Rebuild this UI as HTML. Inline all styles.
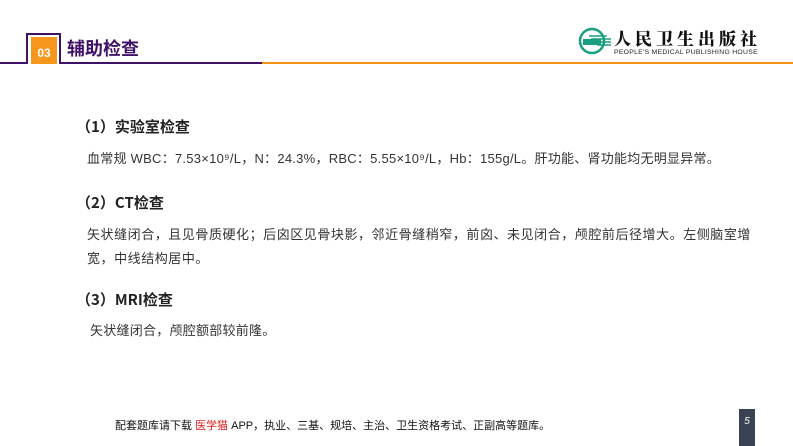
<!DOCTYPE html>
<html><head><meta charset="utf-8"><style>
body{margin:0;width:793px;height:446px;background:#fff;position:relative;overflow:hidden;font-family:"Liberation Sans","Noto Sans CJK SC",sans-serif;color:#222}
.a{position:absolute;white-space:nowrap}
.h{font-weight:bold;font-size:15px;color:#222;font-family:"Noto Sans CJK SC",sans-serif}
.t{font-size:13px;color:#333;letter-spacing:0.25px}
</style></head><body>
<div class="a" style="left:0;top:62px;width:262px;height:2px;background:#3f1266"></div>
<div class="a" style="left:262px;top:62px;width:531px;height:2px;background:#f39419"></div>
<div class="a" style="left:26px;top:33px;width:31px;height:29px;border:2px solid #3f1266;border-bottom:none;background:#fff"></div>
<div class="a" style="left:31px;top:37px;width:26px;height:27px;background:#f7961c;color:#fff;font-weight:bold;font-size:12px;line-height:32px;text-align:center">03</div>
<div class="a" style="left:67px;top:35px;font-size:18px;font-weight:bold;color:#3f1266;font-family:'Noto Sans CJK SC',sans-serif;line-height:26px">辅助检查</div>
<svg class="a" style="left:577px;top:26px" width="36" height="30" viewBox="0 0 36 30"><circle cx="15" cy="15" r="12" fill="none" stroke="#1a9e80" stroke-width="2.5"/><rect x="6" y="13" width="18" height="6" fill="#1a9e80"/><path d="M12 10h18M14 13h20M16 16h18M20 19h14" stroke="#1a9e80" stroke-width="1.5"/></svg>
<div class="a" style="left:614px;top:28px;font-size:17px;font-weight:900;letter-spacing:4px;color:#111;font-family:'Noto Serif CJK SC',serif;line-height:20px">人民卫生出版社</div>
<div class="a" style="left:614px;top:49px;font-size:6.8px;color:#222;letter-spacing:0.3px">PEOPLE'S MEDICAL PUBLISHING HOUSE</div>
<div class="a h" style="left:76px;top:116px">（1）实验室检查</div>
<div class="a t" style="left:87px;top:148px">血常规 WBC：7.53×10⁹/L，N：24.3%，RBC：5.55×10⁹/L，Hb：155g/L。肝功能、肾功能均无明显异常。</div>
<div class="a h" style="left:76px;top:192px">（2）CT检查</div>
<div class="a t" style="left:87px;top:223px;line-height:24px;letter-spacing:0.55px">矢状缝闭合，且见骨质硬化；后囟区见骨块影，邻近骨缝稍窄，前囟、未见闭合，颅腔前后径增大。左侧脑室增<br>宽，中线结构居中。</div>
<div class="a h" style="left:76px;top:289px">（3）MRI检查</div>
<div class="a t" style="left:90px;top:320px">矢状缝闭合，颅腔额部较前隆。</div>
<div class="a" style="left:115px;top:417px;font-size:11px;color:#111">配套题库请下载 <span style="color:#e02020">医学猫</span> APP，执业、三基、规培、主治、卫生资格考试、正副高等题库。</div>
<div class="a" style="left:739px;top:409px;width:16px;height:37px;background:#3a4152;color:#fff;font-size:10px;font-style:italic;text-align:center;line-height:26px">5</div>
</body></html>
